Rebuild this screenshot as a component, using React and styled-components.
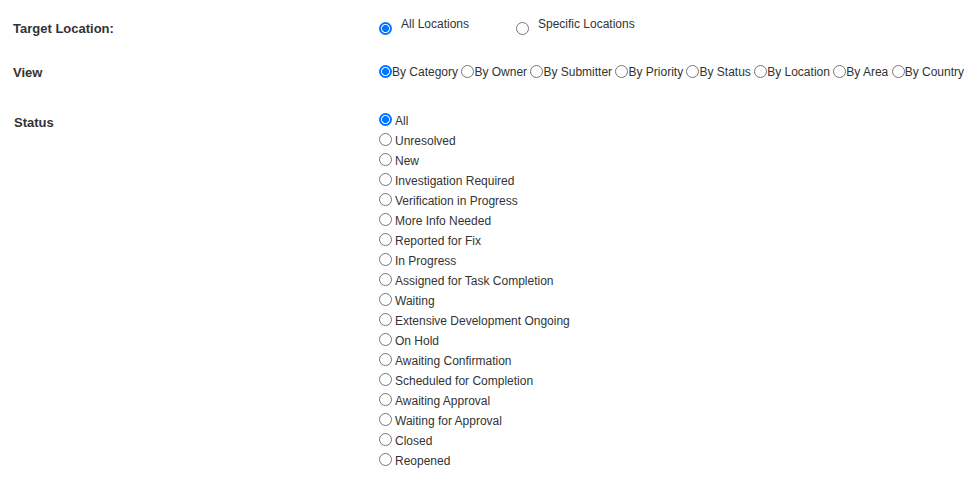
import styled, { createGlobalStyle } from "styled-components";

const GlobalStyle = createGlobalStyle`
  body {
    margin: 0;
    background: #fff;
    font-family: "Liberation Sans", Arial, sans-serif;
    font-size: 12px;
    color: #333;
  }
`;

const Form = styled.div`
  padding-left: 13px;
`;

const Row = styled.div`
  display: grid;
  grid-template-columns: 366px 1fr;
  margin-top: ${(p) => p.$top}px;
  min-height: ${(p) => p.$height || 16}px;
`;

const Label = styled.div`
  font-weight: bold;
  font-size: 13px;
  line-height: 16px;
  padding-top: ${(p) => p.$pad || 0}px;
  padding-left: ${(p) => p.$left || 0}px;
`;

const Radio = styled.input.attrs({ type: "radio" })`
  appearance: none;
  box-sizing: border-box;
  width: 13px;
  height: 13px;
  margin: 0;
  flex: none;
  border-radius: 50%;
  border: 1px solid #767676;
  background: #fff;

  &:checked {
    border: 2px solid #0075ff;
    background: radial-gradient(circle, #0075ff 0 3.2px, #fff 3.8px);
  }
`;

const TargetGroup = styled.div`
  display: flex;
  align-items: flex-start;
`;

const TargetOption = styled.label`
  display: flex;
  align-items: flex-start;
  width: ${(p) => p.$width}px;
  line-height: 16px;
  gap: 9px;

  ${Radio} {
    margin-top: 6px;
  }
`;

const Inline = styled.div`
  line-height: 16px;
  white-space: nowrap;
`;

const InlineOption = styled.label`
  ${Radio} {
    vertical-align: -2px;
  }
`;

const StatusList = styled.div`
  display: flex;
  flex-direction: column;
`;

const StatusOption = styled.label`
  display: flex;
  align-items: center;
  height: 20px;
  gap: 3px;

  ${Radio} {
    margin-top: -3px;
  }
`;

const views = [
  "By Category",
  "By Owner",
  "By Submitter",
  "By Priority",
  "By Status",
  "By Location",
  "By Area",
  "By Country",
];

const statuses = [
  "All",
  "Unresolved",
  "New",
  "Investigation Required",
  "Verification in Progress",
  "More Info Needed",
  "Reported for Fix",
  "In Progress",
  "Assigned for Task Completion",
  "Waiting",
  "Extensive Development Ongoing",
  "On Hold",
  "Awaiting Confirmation",
  "Scheduled for Completion",
  "Awaiting Approval",
  "Waiting for Approval",
  "Closed",
  "Reopened",
];

export default function App() {
  return (
    <>
      <GlobalStyle />
      <Form>
        <Row $top={16} $height={26}>
          <Label $pad={5}>Target Location:</Label>
          <TargetGroup>
            <TargetOption $width={137}>
              <Radio name="target" defaultChecked />
              All Locations
            </TargetOption>
            <TargetOption>
              <Radio name="target" />
              Specific Locations
            </TargetOption>
          </TargetGroup>
        </Row>

        <Row $top={22}>
          <Label $pad={1}>View</Label>
          <Inline>
            {views.map((v, i) => (
              <InlineOption key={v}>
                <Radio name="view" defaultChecked={i === 0} />
                {v}{" "}
              </InlineOption>
            ))}
          </Inline>
        </Row>

        <Row $top={30}>
          <Label $pad={4} $left={1}>Status</Label>
          <StatusList>
            {statuses.map((s, i) => (
              <StatusOption key={s}>
                <Radio name="status" defaultChecked={i === 0} />
                {s}
              </StatusOption>
            ))}
          </StatusList>
        </Row>
      </Form>
    </>
  );
}
